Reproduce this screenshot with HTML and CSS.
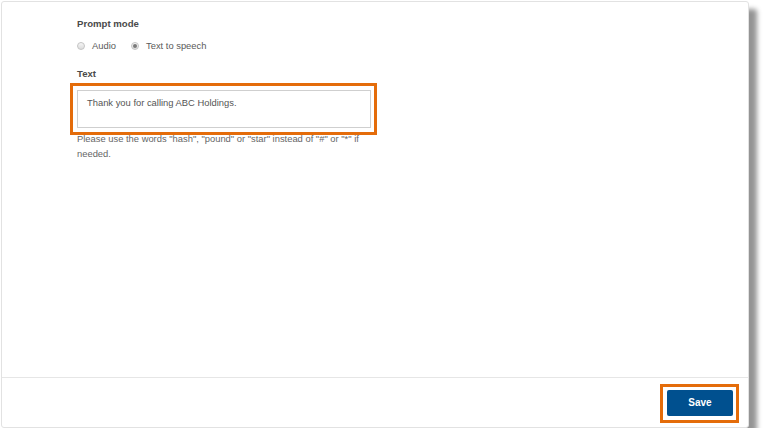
FILE: index.html
```html
<!DOCTYPE html>
<html lang="en">
<head>
<meta charset="utf-8">
<title>Prompt</title>
<link rel="stylesheet" href="styles.css">
</head>
<body>
<div class="panel">
  <div class="content">
    <div class="label">Prompt mode</div>
    <div class="radios">
      <span class="radio"></span><span class="radio-text">Audio</span>
      <span class="radio checked"></span><span class="radio-text">Text to speech</span>
    </div>
    <div class="label label-text">Text</div>
    <div class="ta-wrap">
      <div class="textarea">Thank you for calling ABC Holdings.</div>
      <span class="highlight hl-ta"></span>
    </div>
    <p class="help">Please use the words "hash", "pound" or "star" instead of "#" or "*" if needed.</p>
  </div>
  <div class="footer">
    <div class="btn-wrap">
      <button class="btn">Save</button>
      <span class="highlight hl-btn"></span>
    </div>
  </div>
</div>
</body>
</html>
```
FILE: styles.css
```css
* { box-sizing: border-box; }
html, body { margin: 0; padding: 0; background: #fff; }
body {
  font-family: "Liberation Sans", Arial, sans-serif;
  font-size: 9.4px;
  color: #555;
}
.panel {
  margin: 1px 0 0 1px;
  width: 748px;
  height: 427px;
  border: 1px solid #e2e2e2;
  border-radius: 3px;
  background: #fff;
  box-shadow: 8px 8px 5px rgba(0, 0, 0, 0.42);
  display: flex;
  flex-direction: column;
}
.content {
  flex: 1;
  padding: 16px 0 0 75px;
}
.label {
  font-weight: bold;
  font-size: 9.6px;
  color: #4a4a4a;
  line-height: 12px;
}
.radios {
  display: flex;
  align-items: center;
  height: 12px;
  margin-top: 10px;
  line-height: 12px;
  color: #5a5a5a;
}
.radio {
  width: 8px;
  height: 8px;
  border-radius: 50%;
  border: 1px solid #c4c4c4;
  background: linear-gradient(#f6f6f6, #dcdcdc);
  display: flex;
  align-items: center;
  justify-content: center;
  margin-right: 7px;
}
.radio.checked::after {
  content: "";
  width: 4px;
  height: 4px;
  border-radius: 50%;
  background: #7a7a7a;
}
.radio-text { margin-right: 15px; }
.label-text { margin-top: 16px; }
.ta-wrap {
  position: relative;
  width: 294px;
  margin-top: 10px;
}
.textarea {
  height: 38px;
  border: 1px solid #cfcfcf;
  padding: 5px 9px;
  line-height: 13px;
  color: #555;
}
.highlight {
  position: absolute;
  border: 3px solid #e46c0a;
  pointer-events: none;
}
.hl-ta { top: -7px; right: -6px; bottom: -7px; left: -7px; }
.help {
  margin: 3px 0 0;
  width: 300px;
  line-height: 15px;
  color: #666;
}
.footer {
  height: 50px;
  border-top: 1px solid #e6e6e6;
  display: flex;
  align-items: center;
  justify-content: flex-end;
  padding-right: 15px;
}
.btn-wrap { position: relative; }
.btn {
  display: block;
  width: 66px;
  height: 26px;
  border: none;
  border-radius: 2px;
  background: #00508f;
  color: #fff;
  font-family: "Liberation Sans", Arial, sans-serif;
  font-weight: bold;
  font-size: 10px;
  padding: 0;
}
.hl-btn { top: -6px; right: -6px; bottom: -7px; left: -7px; }
```
